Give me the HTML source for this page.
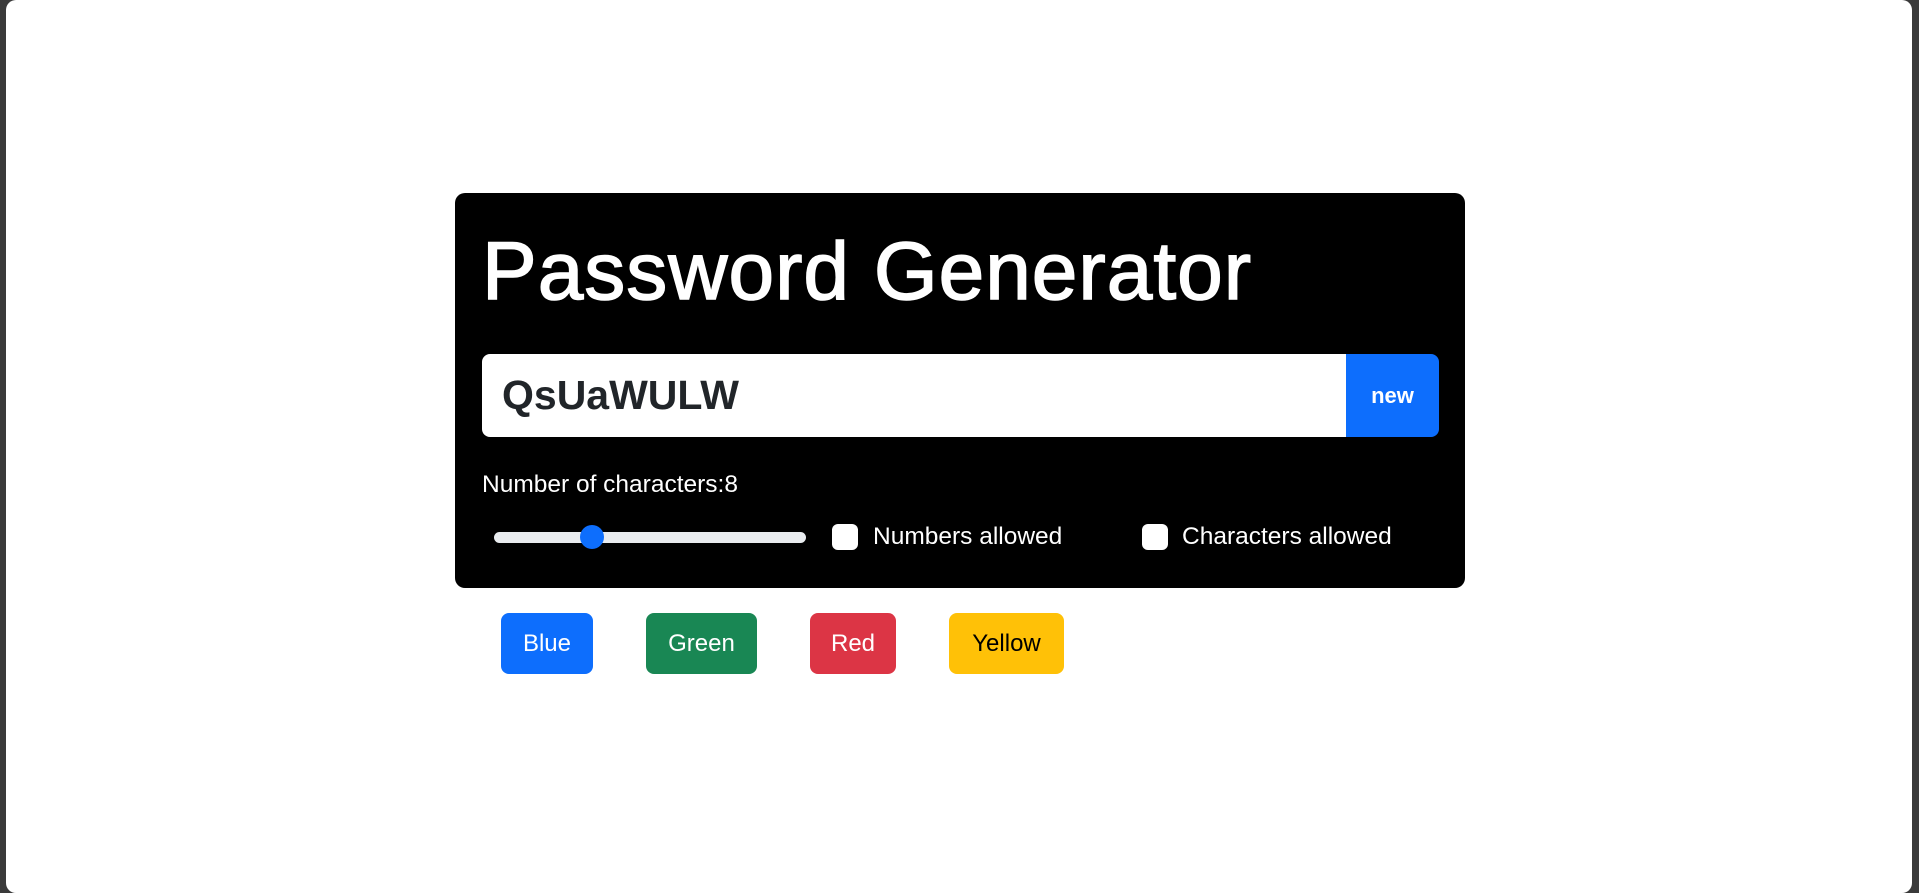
<!DOCTYPE html>
<html><head><style>
html,body{margin:0;padding:0;width:1919px;height:893px;background:#3a3a3a;overflow:hidden}
.page{position:absolute;left:6px;top:0;width:1906px;height:893px;background:#fff;border-radius:10px}
*{box-sizing:border-box;font-family:"Liberation Sans",sans-serif}
.card{position:absolute;left:455px;top:193px;width:1010px;height:395px;background:#000;border-radius:10px}
.abs{position:absolute}
h1{position:absolute;margin:0;left:482px;top:222px;color:#fff;font-size:82px;font-weight:400;line-height:100px;letter-spacing:1px;-webkit-text-stroke:1.5px #fff}
.inp{left:482px;top:354px;width:864px;height:83px;background:#fff;border-radius:8px 0 0 8px;color:#212529;font-weight:700;font-size:41px;line-height:83px;padding-left:20px}
.new{left:1346px;top:354px;width:93px;height:83px;background:#0d6efd;border-radius:0 8px 8px 0;color:#fff;font-weight:700;font-size:22px;line-height:83px;text-align:center}
.lbl{color:#fff;font-size:24.5px}
.track{left:494px;top:532px;width:312px;height:11px;background:#e9ecef;border-radius:6px}
.thumb{left:580px;top:525px;width:24px;height:24px;background:#0d6efd;border-radius:50%}
.cb{width:26px;height:26px;background:#fff;border-radius:6px;top:524px}
.btn{top:613px;height:61px;border-radius:8px;font-size:24px;line-height:61px;text-align:center;color:#fff}
</style></head><body>
<div class="page"></div>
<div class="card"></div>
<h1>Password Generator</h1>
<div class="abs inp">QsUaWULW</div>
<div class="abs new">new</div>
<div class="abs lbl" style="left:482px;top:471px">Number of characters:8</div>
<div class="abs track"></div>
<div class="abs thumb"></div>
<div class="abs cb" style="left:832px"></div>
<div class="abs lbl" style="left:873px;top:523px">Numbers allowed</div>
<div class="abs cb" style="left:1142px"></div>
<div class="abs lbl" style="left:1182px;top:523px">Characters allowed</div>
<div class="abs btn" style="left:501px;width:92px;background:#0d6efd">Blue</div>
<div class="abs btn" style="left:646px;width:111px;background:#198754">Green</div>
<div class="abs btn" style="left:810px;width:86px;background:#dc3545">Red</div>
<div class="abs btn" style="left:949px;width:115px;background:#ffc107;color:#000">Yellow</div>
</body></html>
